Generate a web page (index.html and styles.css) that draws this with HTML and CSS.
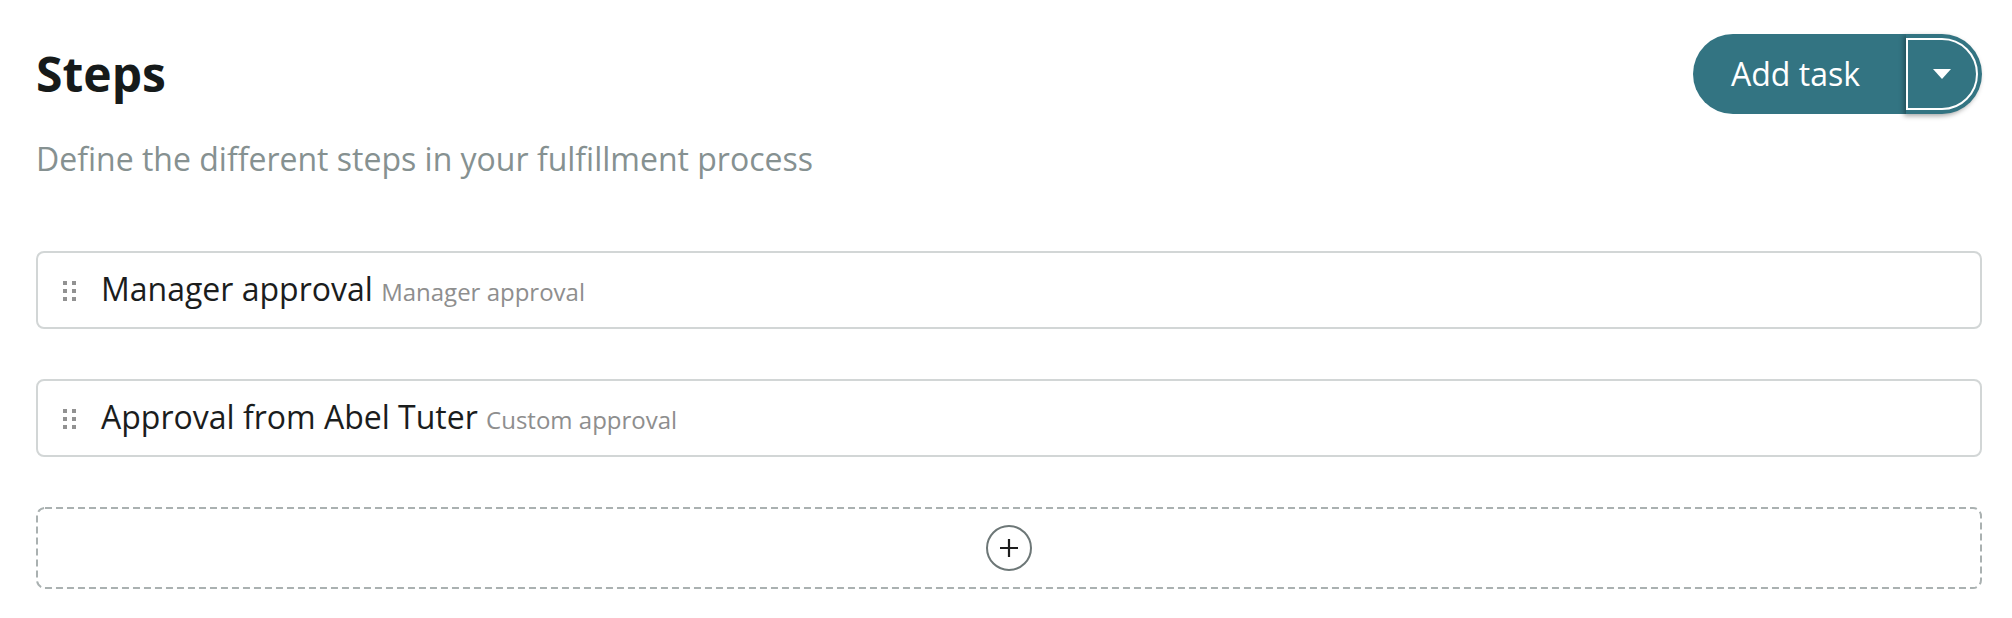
FILE: index.html
```html
<!DOCTYPE html>
<html lang="en">
<head>
<meta charset="utf-8">
<title>Steps</title>
<link rel="stylesheet" href="styles.css">
</head>
<body>
<main class="page">
  <header class="page-header">
    <div class="titles">
      <h1 class="title">Steps</h1>
      <p class="subtitle">Define the different steps in your fulfillment process</p>
    </div>
    <div class="split-button">
      <button class="split-main" type="button">Add task</button>
      <button class="split-toggle" type="button" aria-label="More options">
        <svg class="caret" width="18" height="10" viewBox="0 0 18 10" aria-hidden="true"><path d="M0 0H18L9 10Z" fill="#fff"/></svg>
      </button>
    </div>
  </header>

  <ul class="steps">
    <li class="step">
      <svg class="handle" width="14" height="20" viewBox="0 0 14 20" aria-hidden="true">
        <g fill="#929292">
          <rect x="0" y="0" width="4" height="4"/><rect x="9" y="0" width="4" height="4"/>
          <rect x="0" y="8" width="4" height="4"/><rect x="9" y="8" width="4" height="4"/>
          <rect x="0" y="16" width="4" height="4"/><rect x="9" y="16" width="4" height="4"/>
        </g>
      </svg>
      <span class="step-name">Manager approval <span class="step-type">Manager approval</span></span>
    </li>
    <li class="step">
      <svg class="handle" width="14" height="20" viewBox="0 0 14 20" aria-hidden="true">
        <g fill="#929292">
          <rect x="0" y="0" width="4" height="4"/><rect x="9" y="0" width="4" height="4"/>
          <rect x="0" y="8" width="4" height="4"/><rect x="9" y="8" width="4" height="4"/>
          <rect x="0" y="16" width="4" height="4"/><rect x="9" y="16" width="4" height="4"/>
        </g>
      </svg>
      <span class="step-name">Approval from Abel Tuter <span class="step-type">Custom approval</span></span>
    </li>
    <li class="add-step">
      <svg class="dash-frame" width="100%" height="100%" aria-hidden="true"><rect x="1" y="1" rx="8" ry="8" style="width:calc(100% - 2px);height:calc(100% - 2px)" fill="none" stroke="#aab1b1" stroke-width="2" stroke-dasharray="7 4"/></svg>
      <button class="add-btn" type="button" aria-label="Add step">
        <svg width="20" height="20" viewBox="0 0 20 20" aria-hidden="true"><path d="M10 1V19M1 10H19" stroke="#1e1e1e" stroke-width="2.2" fill="none"/></svg>
      </button>
    </li>
  </ul>
</main>
</body>
</html>
```

FILE: styles.css
```css
* { box-sizing: border-box; }

html, body {
  margin: 0;
  padding: 0;
  background: #ffffff;
}

body {
  font-family: "Open Sans", "Noto Sans", "Liberation Sans", sans-serif;
  color: #1b1d1d;
}

.page {
  padding: 34px 30px 0 36px;
}

.page-header {
  display: flex;
  justify-content: space-between;
  align-items: flex-start;
}

.titles {
  padding-top: 8px;
}

.title {
  margin: 0;
  font-size: 48px;
  line-height: 64px;
  font-weight: 700;
  color: #161a1a;
}

.subtitle {
  margin: 31px 0 0;
  font-size: 32px;
  line-height: 44px;
  color: #869191;
}

.split-button {
  display: flex;
  height: 80px;
}

.split-main {
  height: 80px;
  padding: 0 46px 0 38px;
  border: 0;
  border-radius: 40px 0 0 40px;
  background: #337482;
  color: #ffffff;
  font-family: inherit;
  font-size: 32px;
  line-height: 44px;
}

.split-toggle {
  position: relative;
  width: 76px;
  height: 80px;
  padding: 0 4px 0 0;
  border: 0;
  border-radius: 0 40px 40px 0;
  background: #337482;
  box-shadow: -2px 2px 5px rgba(0, 0, 0, 0.35);
  display: flex;
  align-items: center;
  justify-content: center;
}

.split-toggle::after {
  content: "";
  position: absolute;
  top: 4px;
  right: 4px;
  bottom: 4px;
  left: 0;
  border: 2px solid #ffffff;
  border-radius: 0 36px 36px 0;
}

.caret { display: block; }

.steps {
  list-style: none;
  margin: 70px 0 0;
  padding: 0;
  display: flex;
  flex-direction: column;
  gap: 50px;
}

.step {
  height: 78px;
  border: 2px solid #d2d6d6;
  border-radius: 8px;
  display: flex;
  align-items: center;
  gap: 24px;
  padding: 0 0 0 25px;
}

.handle {
  flex: none;
  display: block;
  margin-top: 1px;
}

.step-name {
  font-size: 32px;
  line-height: 44px;
  color: #1b1d1d;
}

.step-type {
  font-size: 24px;
  color: #8e8e8e;
}

.add-step {
  position: relative;
  height: 82px;
  display: flex;
  align-items: center;
  justify-content: center;
}

.dash-frame {
  position: absolute;
  inset: 0;
}

.add-btn {
  position: relative;
  width: 46px;
  height: 46px;
  border: 2px solid #6d7777;
  border-radius: 50%;
  background: #ffffff;
  padding: 0;
  display: flex;
  align-items: center;
  justify-content: center;
}

.add-btn svg { display: block; }
```
